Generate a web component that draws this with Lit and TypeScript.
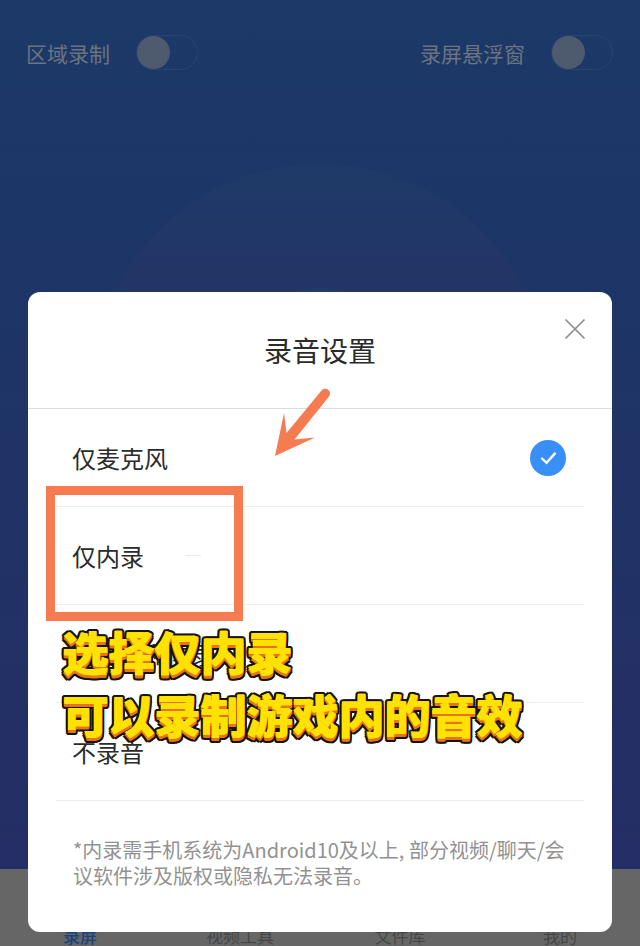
import { LitElement, html, css } from "lit";
import { customElement, state } from "lit/decorators.js";

@customElement("toggle-switch")
class ToggleSwitch extends LitElement {
  static properties = { label: { type: String } };
  declare label: string;
  static styles = css`
    label { display: flex; align-items: center; gap: 26px; font-size: 21px; line-height: 32px; color: #6b7480; }
    input {
      appearance: none; box-sizing: border-box; display: flex; align-items: center;
      width: 62px; height: 35px; margin: 0; border: 1px solid #2a4470; border-radius: 18px;
    }
    input::before { content: ""; width: 33px; height: 33px; border-radius: 50%; background: #4e5a6d; }
    input:checked { justify-content: flex-end; }
  `;
  render() {
    return html`<label>${this.label}<input type="checkbox" role="switch" /></label>`;
  }
}

@customElement("app-root")
class AppRoot extends LitElement {
  static styles = css`
    * { box-sizing: border-box; }
    :host {
      display: block; position: relative; min-height: 100vh; overflow: hidden;
      font-family: "Noto Sans CJK SC", sans-serif; color: #2b2b2b;
    }
    .page { display: flex; flex-direction: column; min-height: 100vh; }
    main {
      flex: 1; position: relative; overflow: hidden;
      background: linear-gradient(#1c3968, #1d3567 33%, #252e66);
    }
    .halo {
      position: absolute; left: 50%; top: 164px; width: 460px; height: 460px; margin-left: -230px;
      border-radius: 50%; background: linear-gradient(#1f3a68, #233566 28%, #263166);
    }
    .halo::after {
      content: ""; position: absolute; inset: 124px; border-radius: 50%; background: #263a69;
    }
    .toggles { position: relative; display: flex; justify-content: space-between; padding: 35px 27px 0 26px; }
    nav { display: grid; grid-template-columns: repeat(4, 1fr); height: 77px; background: #666; }
    nav a {
      align-self: end; text-align: center; font-size: 17px; line-height: 20px;
      color: #464646; text-decoration: none;
    }
    nav a.current { color: #18447c; font-weight: 500; }
    .overlay {
      position: absolute; inset: 0; display: flex; flex-direction: column;
      justify-content: flex-end; padding: 0 28px 14px;
    }
    .dialog { position: relative; background: #fff; border-radius: 12px; }
    header {
      display: flex; align-items: center; justify-content: center; height: 117px;
      border-bottom: 1px solid #d9dcdd;
    }
    h1 { margin: 0; font-size: 28px; line-height: 40px; font-weight: 400; }
    .close {
      position: absolute; top: 22px; right: 22px; width: 30px; height: 30px;
      padding: 4px; border: 0; background: none; color: #8b8c90;
    }
    .close svg { display: block; }
    fieldset { margin: 0 28px; padding: 0; border: 0; }
    .option {
      display: flex; align-items: center; height: 98px;
      padding: 0 18px 0 16px; border-bottom: 1px solid #eee; font-size: 24px; line-height: 36px;
    }
    .dash { width: 16px; height: 1px; margin-left: 41px; background: #eaeaea; }
    .option input { appearance: none; width: 36px; height: 36px; margin: 0; border-radius: 50%; }
    .option input:checked { background: #388ff8; }
    .pick { display: grid; margin-left: auto; }
    .pick > * { grid-area: 1 / 1; }
    .pick svg { display: none; pointer-events: none; }
    input:checked + svg { display: block; }
    .note { margin: 0; padding: 36px 44px 43px 45px; font-size: 20px; line-height: 26px; color: #929292; }
    .frame {
      position: absolute; left: 18px; top: 194px; width: 197px; height: 135px; border: 9px solid #f77b50;
      pointer-events: none;
    }
    .arrow { position: absolute; left: 242px; top: 92px; pointer-events: none; }
    .caption {
      position: absolute; left: 35px; top: 327px; margin: 0; white-space: nowrap; pointer-events: none;
      font-size: 46px; line-height: 63px; font-weight: 900; color: #ffe200;
      text-shadow:
        -1px 0 #ffe200,
        0 1px #e8731c, 0 2px #e8731c, -1px 2px #e8731c, 0 3px #e8731c, -1px 3px #e8731c,
        -3px 0 #17120b, 2px 0 #17120b, 0 -2px #17120b, -2px -2px #17120b, 1px -2px #17120b,
        -3px -1px #17120b, 2px -1px #17120b, -3px 2px #17120b, 2px 2px #17120b,
        -3px 4px #17120b, 2px 4px #17120b, -2px 5px #17120b, 1px 5px #17120b, 0 5px #17120b;
    }
  `;

  @state() private selected = 0;
  private options = ["仅麦克风", "仅内录", "麦克风和内录", "不录音"];
  private tabs = ["录屏", "视频工具", "文件库", "我的"];

  render() {
    return html`
      <div class="page">
        <main>
          <div class="halo"></div>
          <div class="toggles">
            <toggle-switch label="区域录制"></toggle-switch>
            <toggle-switch label="录屏悬浮窗"></toggle-switch>
          </div>
        </main>
        <nav>
          ${this.tabs.map((t, i) => html`<a href="#" class=${i === 0 ? "current" : ""}>${t}</a>`)}
        </nav>
      </div>
      <div class="overlay">
        <section class="dialog" role="dialog" aria-labelledby="title">
          <header>
            <h1 id="title">录音设置</h1>
            <button class="close" aria-label="关闭">
              <svg width="22" height="22" viewBox="0 0 22 22" fill="none" stroke="currentColor" stroke-width="1.7">
                <path d="M1.5 1.5 20.5 20.5M20.5 1.5 1.5 20.5" />
              </svg>
            </button>
          </header>
          <fieldset aria-labelledby="title">
            ${this.options.map((o, i) => html`
              <label class="option">
                <span>${o}</span>
                ${i === 1 ? html`<span class="dash"></span>` : ""}
                <span class="pick">
                  <input type="radio" name="source" .checked=${this.selected === i} @change=${() => (this.selected = i)} />
                  <svg width="36" height="36" viewBox="0 0 36 36" fill="none" stroke="#fff" stroke-width="2.4" stroke-linecap="round">
                    <path d="M12 18.500 16.500 22.800 24.800 13.600" />
                  </svg>
                </span>
              </label>`)}
          </fieldset>
          <p class="note">*内录需手机系统为Android10及以上, 部分视频/聊天/会议软件涉及版权或隐私无法录音。</p>
          <div class="frame"></div>
          <svg class="arrow" width="66" height="76" viewBox="270 384 66 76" fill="#f77b50">
            <path d="M275 456 284 413 286.500 433 321.500 390.500A4.500 4.500 0 0 1 329 396.500L294.500 439.500 315 437.500Z" />
          </svg>
          <p class="caption">选择仅内录<br />可以录制游戏内的音效</p>
        </section>
      </div>
    `;
  }
}
